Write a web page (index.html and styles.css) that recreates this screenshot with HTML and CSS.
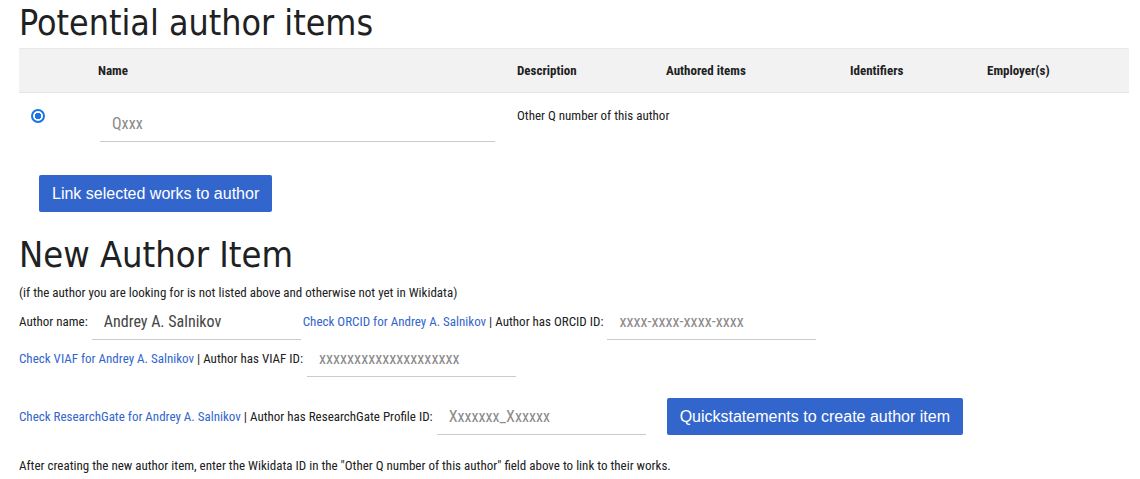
FILE: index.html
```html
<!DOCTYPE html>
<html>
<head>
<meta charset="utf-8">
<link rel="stylesheet" href="styles.css">
</head>
<body>
<h1 class="title">Potential author items</h1>
<table class="authors">
  <colgroup>
    <col class="c-radio"><col class="c-name"><col class="c-desc"><col class="c-auth"><col class="c-ids"><col class="c-emp">
  </colgroup>
  <thead>
    <tr><th></th><th>Name</th><th>Description</th><th>Authored items</th><th>Identifiers</th><th>Employer(s)</th></tr>
  </thead>
  <tbody>
    <tr>
      <td><input type="radio" class="radio" name="author" checked></td>
      <td><input type="text" class="field field-q" placeholder="Qxxx"></td>
      <td class="desc">Other Q number of this author</td>
      <td></td><td></td><td></td>
    </tr>
  </tbody>
</table>
<div class="actions">
  <button class="btn">Link selected works to author</button>
</div>
<h1 class="title title-new">New Author Item</h1>
<p class="note">(if the author you are looking for is not listed above and otherwise not yet in Wikidata)</p>
<div class="row row-first">
  <span class="label">Author name:</span>
  <input type="text" class="field field-name" value="Andrey A. Salnikov">
  <span class="text"><a href="#" class="link">Check ORCID for Andrey A. Salnikov</a> | Author has ORCID ID:</span>
  <input type="text" class="field" placeholder="xxxx-xxxx-xxxx-xxxx">
</div>
<div class="row">
  <span class="text"><a href="#" class="link">Check VIAF for Andrey A. Salnikov</a> | Author has VIAF ID:</span>
  <input type="text" class="field" placeholder="xxxxxxxxxxxxxxxxxxxx">
</div>
<div class="row row-rg">
  <span class="text"><a href="#" class="link">Check ResearchGate for Andrey A. Salnikov</a> | Author has ResearchGate Profile ID:</span>
  <input type="text" class="field" placeholder="Xxxxxxx_Xxxxxx">
  <button class="btn btn-qs">Quickstatements to create author item</button>
</div>
<p class="after">After creating the new author item, enter the Wikidata ID in the "Other Q number of this author" field above to link to their works.</p>
</body>
</html>
```
FILE: styles.css
```css
html, body {
  margin: 0;
  background: #fff;
}
body {
  padding: 0 11px 0 19px;
  font-family: "Roboto Condensed", "Roboto", sans-serif;
  font-stretch: condensed;
  font-size: 13px;
  color: #202122;
}
.title {
  font-family: "DejaVu Sans", sans-serif;
  font-weight: normal;
  font-size: 35.5px;
  line-height: 44px;
  margin: 0 0 4px 0;
  padding-top: 1px;
  color: #202122;
}
.authors {
  border-collapse: collapse;
  width: 1110px;
  table-layout: fixed;
  margin-top: -1px;
}
.c-radio { width: 67px; }
.c-name { width: 419px; }
.c-desc { width: 149px; }
.c-auth { width: 184px; }
.c-ids { width: 137px; }
.c-emp { width: 154px; }
.authors thead th {
  background: #f2f2f2;
  border-top: 1px solid #e8e8e8;
  border-bottom: 1px solid #e4e4e4;
  height: 43px;
  padding: 0 12px;
  text-align: left;
  font-size: 13px;
  font-weight: bold;
  color: #202122;
}
.authors tbody td {
  vertical-align: top;
  padding: 12px 12px 12px 12px;
}
.radio {
  appearance: none;
  -webkit-appearance: none;
  margin: 4px 0 0 0;
  width: 14px;
  height: 14px;
  border: 2px solid #1a73e8;
  border-radius: 50%;
  box-sizing: border-box;
  background: radial-gradient(circle, #1a73e8 0 3px, #fff 3.5px);
  display: block;
}
.desc {
  padding-top: 15px !important;
  white-space: nowrap;
  font-size: 13px;
}
.field {
  font-family: "Roboto Condensed", "Roboto", sans-serif;
  font-stretch: condensed;
  font-size: 16px;
  color: #444;
  border: none;
  border-bottom: 1px solid #c8ccd1;
  outline: none;
  background: transparent;
  height: 37px;
  box-sizing: border-box;
  padding: 0 12px;
  width: 209px;
}
.field::placeholder {
  color: #8a8a8a;
}
.field-q {
  width: 395px;
  margin-left: 2px;
}
.actions {
  padding: 21px 0 0 20px;
}
.btn {
  font-family: "Liberation Sans", Arial, sans-serif;
  font-size: 16px;
  color: #fff;
  background: #3366cc;
  border: none;
  border-radius: 2px;
  height: 37px;
  padding: 0 13px;
  cursor: pointer;
}
.title-new {
  font-size: 36px;
  margin-top: 20px;
  margin-bottom: 8px;
}
.note {
  margin: 0;
}
.row {
  display: flex;
  align-items: center;
}
.row-first {
  margin-top: 3px;
}
.label { margin-right: 4px; }
.text { margin-right: 4px; }
.field-name { margin-right: 2px; }
.link {
  color: #3366cc;
  text-decoration: none;
}
.row-rg {
  margin-top: 21px;
}
.btn-qs {
  margin-left: 21px;
}
.after {
  margin: 23px 0 0 0;
}
```
